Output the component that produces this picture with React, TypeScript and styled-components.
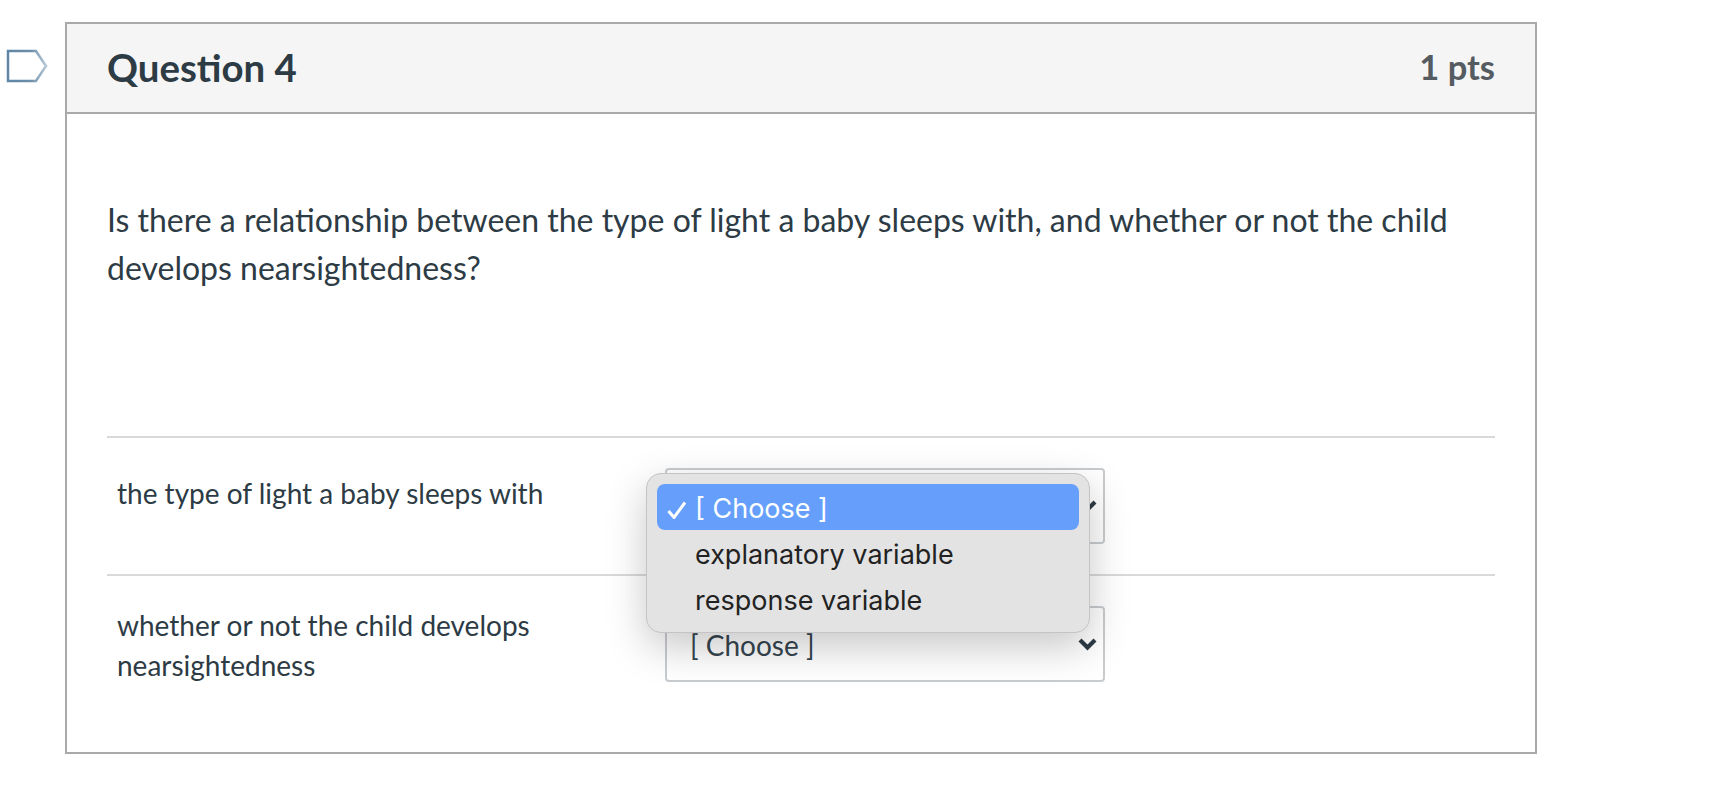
import React from "react";
import styled, { createGlobalStyle } from "styled-components";

const Global = createGlobalStyle`
  html, body { margin: 0; padding: 0; background: #fff; }
  body { font-family: Lato, "Liberation Sans", sans-serif; color: #2d3b45; }
`;

const Page = styled.div`
  width: 1728px;
  height: 786px;
  overflow: hidden;
  padding: 22px 0 0 65px;
  box-sizing: border-box;
  position: relative;
`;

const Marker = styled.svg`
  position: absolute;
  left: 6px;
  top: 49px;
`;

const Card = styled.section`
  width: 1472px;
  height: 732px;
  box-sizing: border-box;
  border: 2px solid #a9a9a9;
`;

const Header = styled.header`
  height: 90px;
  box-sizing: border-box;
  background: #f5f5f5;
  border-bottom: 2px solid #a9a9a9;
  display: flex;
  align-items: center;
  justify-content: space-between;
  padding: 0 40px 0 40px;
`;

const Title = styled.h2`
  margin: -2px 0 0;
  font-size: 38.4px;
  font-weight: 700;
  color: #2d3b45;
`;

const Points = styled.span`
  margin-top: -4px;
  font-size: 34.5px;
  font-weight: 700;
  color: #555c61;
`;

const Body = styled.div`
  padding: 0 40px 0 40px;
`;

const Prompt = styled.p`
  margin: 0;
  padding-top: 82px;
  height: 322px;
  box-sizing: border-box;
  font-size: 32px;
  line-height: 48px;
  color: #2d3b45;
`;

const Row = styled.div<{ $height: number }>`
  height: ${(p) => p.$height}px;
  box-sizing: border-box;
  border-top: 2px solid #d9d9d9;
  display: flex;
  align-items: flex-start;
  position: relative;
`;

const Label = styled.div<{ $top: number }>`
  width: 558px;
  padding: ${(p) => p.$top}px 0 0 10px;
  box-sizing: border-box;
  font-size: 28px;
  line-height: 40px;
  color: #2d3b45;
`;

const SelectBox = styled.div<{ $top: number; $height: number }>`
  margin-top: ${(p) => p.$top}px;
  width: 440px;
  height: ${(p) => p.$height}px;
  box-sizing: border-box;
  border: 2px solid #c9cccf;
  border-radius: 4px;
  background: #fff;
  display: flex;
  align-items: center;
  justify-content: space-between;
  padding: 0 6px 0 23px;
`;

const SelectValue = styled.span`
  font-size: 28px;
  color: #36454f;
  position: relative;
  top: 1px;
`;

const Popup = styled.div`
  position: absolute;
  left: 646px;
  top: 473px;
  width: 444px;
  height: 160px;
  box-sizing: border-box;
  background: #e3e3e3;
  border: 1px solid #c4c4c4;
  border-radius: 15px;
  padding: 10px;
  box-shadow: 0 14px 40px rgba(0, 0, 0, 0.22);
  font-family: Inter, "Liberation Sans", sans-serif;
  font-size: 27px;
  color: #222;
`;

const Option = styled.div<{ $selected?: boolean }>`
  height: 46px;
  display: flex;
  align-items: center;
  padding: 2px 0 0 38px;
  box-sizing: border-box;
  position: relative;
  border-radius: 8px;
  background: ${(p) => (p.$selected ? "#659ffb" : "transparent")};
  color: ${(p) => (p.$selected ? "#fff" : "#222")};
`;

const Check = styled.svg`
  position: absolute;
  left: 10px;
  top: 17px;
`;

const Chevron = () => (
  <svg width="24" height="16" viewBox="0 0 24 16" fill="none">
    <path d="M7 4 L14.5 11.5 L22 4" stroke="#2d3b45" strokeWidth="4.2" />
  </svg>
);

export default function App() {
  return (
    <Page>
      <Global />
      <Marker width="42" height="34" viewBox="0 0 42 34" fill="none">
        <defs>
          <linearGradient id="markerStroke" x1="0" x2="1" y1="0" y2="0">
            <stop offset="0" stopColor="#5f86a6" />
            <stop offset="0.6" stopColor="#6c8ea8" />
            <stop offset="1" stopColor="#b5c8d8" />
          </linearGradient>
        </defs>
        <path d="M2 2 H30 L40 17 L30 32 H2 Z" fill="#fff" stroke="url(#markerStroke)" strokeWidth="2.5" />
      </Marker>
      <Card>
        <Header>
          <Title>Question 4</Title>
          <Points>1 pts</Points>
        </Header>
        <Body>
          <Prompt>
            Is there a relationship between the type of light a baby sleeps with, and whether or not the child develops nearsightedness?
          </Prompt>
          <Row $height={138}>
            <Label $top={35}>the type of light a baby sleeps with</Label>
            <SelectBox $top={30} $height={76}>
              <span />
              <Chevron />
            </SelectBox>
          </Row>
          <Row $height={170}>
            <Label $top={29}>whether or not the child develops nearsightedness</Label>
            <SelectBox $top={30} $height={76}>
              <SelectValue>[ Choose ]</SelectValue>
              <Chevron />
            </SelectBox>
          </Row>
        </Body>
      </Card>
      <Popup>
        <Option $selected>
          <Check width="20" height="18" viewBox="0 0 20 18" fill="none">
            <path d="M1.5 10 L7 16.5 L18 1.5" stroke="#fff" strokeWidth="3" />
          </Check>
          [ Choose ]
        </Option>
        <Option>explanatory variable</Option>
        <Option>response variable</Option>
      </Popup>
    </Page>
  );
}
